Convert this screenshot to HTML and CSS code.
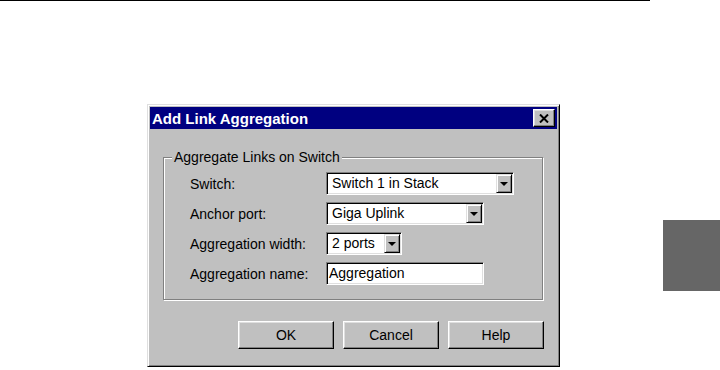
FILE: index.html
```html
<!DOCTYPE html>
<html lang="en">
<head>
    <meta charset="utf-8">
    <title>Add Link Aggregation</title>
    <link rel="stylesheet" href="styles.css">
</head>
<body>
    <div class="rule"></div>
    <div class="stage">
        <div class="dialog">
            <div class="titlebar">
                <span class="title">Add Link Aggregation</span>
                <span class="close">
                    <svg width="10" height="9" viewBox="0 0 10 9">
                        <path d="M1 0.5 L9 8.5 M9 0.5 L1 8.5" stroke="#000" stroke-width="2" fill="none"/>
                    </svg>
                </span>
            </div>

            <fieldset class="group">
                <legend>Aggregate Links on Switch</legend>
                <div class="rows">
                    <div class="row">
                        <label>Switch:</label>
                        <div class="combo combo-wide"><span class="value">Switch 1 in Stack</span><span class="drop"></span></div>
                    </div>
                    <div class="row">
                        <label>Anchor port:</label>
                        <div class="combo combo-mid"><span class="value">Giga Uplink</span><span class="drop"></span></div>
                    </div>
                    <div class="row">
                        <label>Aggregation width:</label>
                        <div class="combo combo-small"><span class="value">2 ports</span><span class="drop"></span></div>
                    </div>
                    <div class="row">
                        <label>Aggregation name:</label>
                        <div class="combo combo-mid"><span class="value text">Aggregation</span></div>
                    </div>
                </div>
            </fieldset>

            <div class="buttons">
                <button class="btn">OK</button>
                <button class="btn">Cancel</button>
                <button class="btn">Help</button>
            </div>
        </div>
        <div class="tab"></div>
    </div>
</body>
</html>
```

FILE: styles.css
```css
* {
    margin: 0;
    padding: 0;
    box-sizing: border-box;
}
body {
    background: #fff;
    font-family: "Liberation Sans", Arial, sans-serif;
    font-size: 14px;
    color: #000;
}
.rule {
    width: 650px;
    height: 1px;
    background: #000;
}
.stage {
    display: flex;
}
.tab {
    margin-left: auto;
    margin-top: 219px;
    width: 57px;
    height: 71px;
    background: #666;
}

/* window */
.dialog {
    margin-left: 147px;
    margin-top: 103px;
    width: 413px;
    height: 263px;
    padding: 2px;
    background: #c0c0c0;
    border: 1px solid;
    border-color: #dfdfdf #000 #000 #dfdfdf;
    box-shadow: inset 1px 1px #fff, inset -1px -1px #808080;
}
.titlebar {
    height: 22px;
    background: #000080;
    color: #fff;
    display: flex;
    align-items: center;
    justify-content: space-between;
    padding: 0 2px;
}
.title {
    font-weight: 700;
    font-size: 15px;
}
.close {
    width: 22px;
    height: 18px;
    display: flex;
    align-items: center;
    justify-content: center;
    background: #c0c0c0;
    border: 1px solid;
    border-color: #fff #000 #000 #fff;
    box-shadow: inset -1px -1px #808080, inset 1px 1px #dfdfdf;
}

/* group box */
.group {
    margin: 20px 14px 0 13px;
    padding: 0 13px 14px 8px;
    border: 1px solid #808080;
    box-shadow: 1px 1px 0 #fff, inset 1px 1px 0 #fff;
    min-width: 0;
}
.group legend {
    padding: 0 2px;
    line-height: 16px;
    background: #c0c0c0;
}
.rows {
    padding: 7px 0 0 18px;
}
.row {
    display: flex;
    align-items: center;
    height: 23px;
    margin-top: 7px;
}
.row:first-child {
    margin-top: 0;
}
.row label {
    width: 136px;
}

/* combo + text field */
.combo {
    height: 23px;
    display: flex;
    padding: 1px;
    background: #fff;
    border: 1px solid;
    border-color: #808080 #fff #fff #808080;
    box-shadow: inset 1px 1px #000, inset -1px -1px #dfdfdf;
}
.combo-wide { width: 188px; }
.combo-mid { width: 158px; }
.combo-small { width: 76px; }
.value {
    flex: 1;
    line-height: 19px;
    padding-left: 4px;
    white-space: nowrap;
    overflow: hidden;
}
.value.text {
    padding-left: 1px;
}
.drop {
    width: 16px;
    height: 19px;
    position: relative;
    background: #c0c0c0;
    border: 1px solid;
    border-color: #dfdfdf #000 #000 #dfdfdf;
    box-shadow: inset 1px 1px #fff, inset -1px -1px #808080;
}
.drop::after {
    content: "";
    position: absolute;
    left: 3px;
    top: 7px;
    border-left: 4px solid transparent;
    border-right: 4px solid transparent;
    border-top: 4px solid #000;
}

/* buttons */
.buttons {
    display: flex;
    justify-content: flex-end;
    gap: 9px;
    margin: 21px 13px 0 0;
}
.btn {
    width: 96px;
    height: 28px;
    font: inherit;
    color: #000;
    background: #c0c0c0;
    border: 1px solid;
    border-color: #fff #000 #000 #fff;
    box-shadow: inset -1px -1px #808080, inset 1px 1px #dfdfdf;
}
```
